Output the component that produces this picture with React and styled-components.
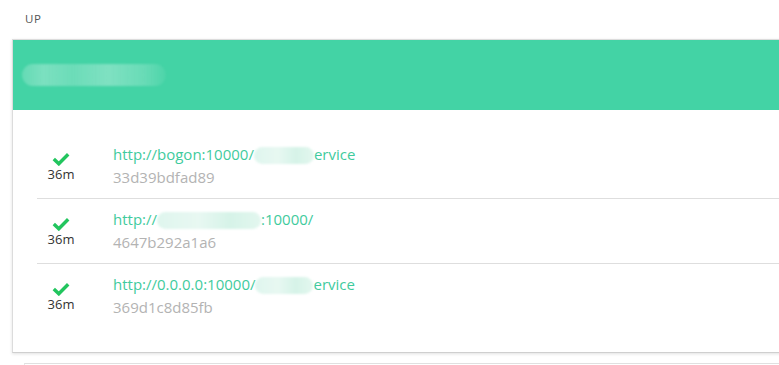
import React from "react";
import styled, { createGlobalStyle } from "styled-components";

const Global = createGlobalStyle`
  html, body { margin: 0; padding: 0; background: #fff; }
  body { font-family: "Open Sans", "Noto Sans", "Liberation Sans", sans-serif; overflow: hidden; }
`;

const Page = styled.div`
  width: 779px;
  height: 365px;
  overflow: hidden;
  padding-top: 12px;
  box-sizing: border-box;
`;

const SectionLabel = styled.div`
  margin-left: 25px;
  font-size: 11.5px;
  line-height: 14px;
  letter-spacing: 0.6px;
  color: #555;
  margin-bottom: 13px;
`;

const Card = styled.div`
  margin-left: 12px;
  margin-right: -20px;
  border: 1px solid #dcdcdc;
  border-bottom-color: #cfcfcf;
  box-shadow: 0 1px 3px rgba(0, 0, 0, 0.12);
  background: #fff;
`;

const Header = styled.div`
  height: 70px;
  background: #43d3a5;
  display: flex;
  align-items: center;
  padding-left: 9px;
`;

const Redacted = styled.span`
  display: inline-block;
  width: ${(p) => p.$w}px;
  height: ${(p) => p.$h}px;
  border-radius: ${(p) => p.$h / 2}px;
  background: ${(p) => p.$bg};
  filter: blur(1px);
  vertical-align: middle;
`;

const List = styled.div`
  padding: 24px 0 23px 24px;
`;

const Row = styled.div`
  display: flex;
  align-items: center;
  padding: 9px 0;
  border-bottom: 1px solid ${(p) => (p.$last ? "transparent" : "#dedede")};
`;

const Status = styled.div`
  width: 48px;
  margin-right: 28px;
  display: flex;
  flex-direction: column;
  align-items: center;
  padding-top: 2px;
`;

const Age = styled.span`
  font-size: 13px;
  line-height: 16px;
  color: #333;
`;

const Info = styled.div`
  display: flex;
  flex-direction: column;
`;

const Url = styled.a`
  font-size: 15px;
  line-height: 23px;
  color: #3fcb9d;
  text-decoration: none;
  white-space: nowrap;
`;

const Hash = styled.span`
  font-size: 15px;
  line-height: 23px;
  color: #b3b3b3;
`;

const NextCard = styled.div`
  margin: 10px 0 0 24px;
  height: 20px;
  border-top: 1px solid #e0e0e0;
  border-left: 1px solid #e8e8e8;
`;

const Check = () => (
  <svg width="18" height="14" viewBox="0 0 18 14">
    <path d="M1.8 7 L6.8 11.8 L16.2 2.2" fill="none" stroke="#22c55e" strokeWidth="3.4" strokeLinecap="butt" strokeLinejoin="miter" />
  </svg>
);

const Blob = ({ w }) => (
  <Redacted $w={w} $h={17} $bg="linear-gradient(90deg, #dff6ee 0%, #e8f8f2 40%, #d6f3e8 70%, #e3f7ef 100%)" />
);

const rows = [
  { pre: "http://bogon:10000/", blob: 60, post: "ervice", hash: "33d39bdfad89" },
  { pre: "http://", blob: 104, post: ":10000/", hash: "4647b292a1a6" },
  { pre: "http://0.0.0.0:10000/", blob: 58, post: "ervice", hash: "369d1c8d85fb" },
];

export default function App() {
  return (
    <>
      <Global />
      <Page>
        <SectionLabel>UP</SectionLabel>
        <Card>
          <Header>
            <Redacted
              $w={144}
              $h={22}
              $bg="linear-gradient(90deg, rgba(255,255,255,0.18) 0%, rgba(255,255,255,0.3) 15%, rgba(255,255,255,0.22) 35%, rgba(255,255,255,0.32) 60%, rgba(255,255,255,0.2) 85%, rgba(255,255,255,0.05) 100%)"
            />
          </Header>
          <List>
            {rows.map((r, i) => (
              <Row key={r.hash} $last={i === rows.length - 1}>
                <Status>
                  <Check />
                  <Age>36m</Age>
                </Status>
                <Info>
                  <Url href="#">
                    {r.pre}
                    <Blob w={r.blob} />
                    {r.post}
                  </Url>
                  <Hash>{r.hash}</Hash>
                </Info>
              </Row>
            ))}
          </List>
        </Card>
        <NextCard />
      </Page>
    </>
  );
}
